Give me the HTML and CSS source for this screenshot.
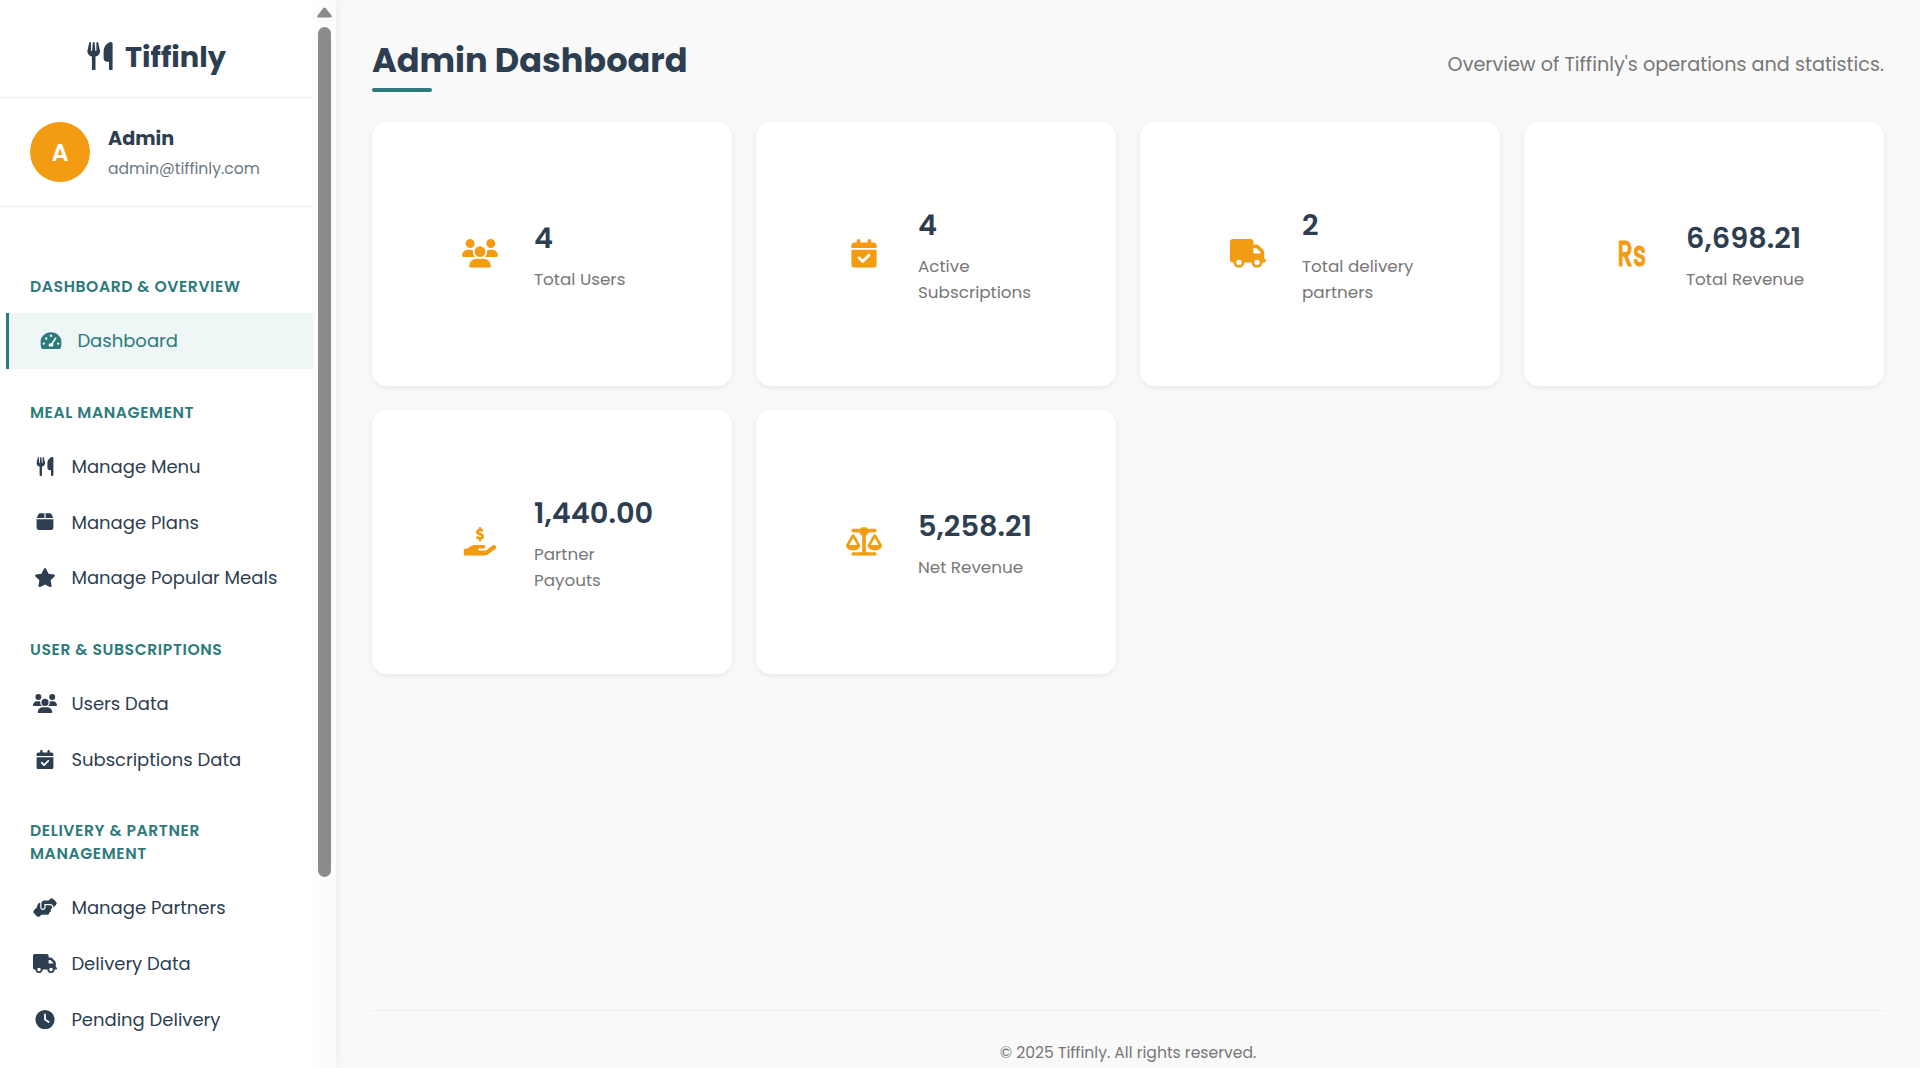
FILE: index.html
```html
<!DOCTYPE html>
<html lang="en">
<head>
<meta charset="utf-8">
<title>Admin Dashboard - Tiffinly</title>
<link rel="stylesheet" href="styles.css">
</head>
<body>
<svg class="sprite" aria-hidden="true">
  <symbol id="utensils" viewBox="0 0 448 512"><path d="M416 0C400 0 288 32 288 176V288c0 35.3 28.7 64 64 64h32V480c0 17.7 14.3 32 32 32s32-14.3 32-32V352 240 32c0-17.7-14.3-32-32-32zM64 16C64 7.8 57.9 1 49.7 .1S34.2 4.6 32.4 12.5L2.1 148.8C.7 155.1 0 161.5 0 167.9c0 45.9 35.1 83.6 80 87.7V480c0 17.7 14.3 32 32 32s32-14.3 32-32V255.6c44.9-4.1 80-41.8 80-87.7c0-6.4-.7-12.8-2.1-19.1L191.6 12.5c-1.8-8-9.3-13.3-17.4-12.4S160 7.8 160 16V150.2c0 5.4-4.4 9.8-9.8 9.8c-5.1 0-9.3-3.9-9.8-9L127.9 14.6C127.2 6.3 120.3 0 112 0s-15.2 6.3-15.9 14.6L83.7 151c-.5 5.1-4.7 9-9.8 9c-5.4 0-9.8-4.4-9.8-9.8V16z"/></symbol>
  <symbol id="gauge" viewBox="0 0 576 512">
    <mask id="gauge-face" maskUnits="userSpaceOnUse" x="0" y="0" width="576" height="512">
      <rect width="576" height="512" fill="#fff"/>
      <circle cx="96" cy="336" r="32" fill="#000"/>
      <circle cx="160" cy="200" r="32" fill="#000"/>
      <circle cx="288" cy="128" r="32" fill="#000"/>
      <circle cx="480" cy="336" r="32" fill="#000"/>
      <path d="M292 376L410 196" stroke="#000" stroke-width="46" stroke-linecap="round"/>
      <path d="M233 416a64 64 0 1 1 110 0z" fill="#000"/>
    </mask>
    <path mask="url(#gauge-face)" d="M288 32C128.94 32 0 160.94 0 320c0 52.8 14.25 102.26 39.06 144.8 5.61 9.62 16.3 15.2 27.44 15.2h443c11.14 0 21.83-5.58 27.44-15.2C561.75 422.26 576 372.8 576 320c0-159.06-128.94-288-288-288z"/>
  </symbol>
  <symbol id="box" viewBox="0 0 448 512"><path d="M50.7 58.5L0 160H208V32H93.7C75.5 32 58.9 42.3 50.7 58.5zM240 160H448L397.3 58.5C389.1 42.3 372.5 32 354.3 32H240V160zm208 32H0V416c0 35.3 28.7 64 64 64H384c35.3 0 64-28.7 64-64V192z"/></symbol>
  <symbol id="star" viewBox="0 0 576 512"><path d="M316.9 18C311.6 7 300.4 0 288.1 0s-23.4 7-28.8 18L195 150.3 51.4 171.5c-12 1.8-22 10.2-25.7 21.7s-.7 24.2 7.9 32.7L137.8 329 113.2 474.7c-2 12 3 24.2 12.9 31.3s23 8 33.8 2.3l128.3-68.5 128.3 68.5c10.8 5.7 23.9 4.9 33.8-2.3s14.9-19.3 12.9-31.3L438.5 329 542.7 225.9c8.6-8.5 11.7-21.2 7.9-32.7s-13.7-19.9-25.7-21.7L381.2 150.3 316.9 18z"/></symbol>
  <symbol id="users" viewBox="0 0 640 512"><path d="M144 0a80 80 0 1 1 0 160A80 80 0 1 1 144 0zM512 0a80 80 0 1 1 0 160A80 80 0 1 1 512 0zM0 298.7C0 239.8 47.8 192 106.7 192h42.7c15.9 0 31 3.5 44.6 9.7c-1.3 7.2-1.9 14.7-1.9 22.3c0 38.2 16.8 72.5 43.3 96c-.2 0-.4 0-.7 0H21.3C9.6 320 0 310.4 0 298.7zM405.3 320c-.2 0-.4 0-.7 0c26.6-23.5 43.3-57.8 43.3-96c0-7.6-.7-15-1.9-22.3c13.6-6.3 28.7-9.7 44.6-9.7h42.7C592.2 192 640 239.8 640 298.7c0 11.8-9.6 21.3-21.3 21.3H405.3zM224 224a96 96 0 1 1 192 0 96 96 0 1 1 -192 0zM128 485.3C128 411.7 187.7 352 261.3 352H378.7C452.3 352 512 411.7 512 485.3c0 14.7-11.9 26.7-26.7 26.7H154.7c-14.7 0-26.7-11.9-26.7-26.7z"/></symbol>
  <symbol id="calendar" viewBox="0 0 448 512"><path d="M128 0c17.7 0 32 14.3 32 32V64H288V32c0-17.7 14.3-32 32-32s32 14.3 32 32V64h48c26.5 0 48 21.5 48 48v48H0V112C0 85.5 21.5 64 48 64H96V32c0-17.7 14.3-32 32-32zM0 192H448V464c0 26.5-21.5 48-48 48H48c-26.5 0-48-21.5-48-48V192zM329 305c9.4-9.4 9.4-24.6 0-33.9s-24.6-9.4-33.9 0l-95 95-47-47c-9.4-9.4-24.6-9.4-33.9 0s-9.4 24.6 0 33.9l64 64c9.4 9.4 24.6 9.4 33.9 0L329 305z"/></symbol>
  <symbol id="handshake" viewBox="0 0 640 512"><path d="M544 248v3.3l69.7-69.7c21.9-21.9 21.9-57.3 0-79.2L535.6 24.4c-21.9-21.9-57.3-21.9-79.2 0L416.3 64.5c-2.7-.3-5.5-.5-8.3-.5H296c-37.1 0-67.6 28-71.6 64H224V248c0 22.1 17.9 40 40 40s40-17.9 40-40V176c0 0 0-.1 0-.1V160l16 0 136 0c0 0 0 0 .1 0H464c44.2 0 80 35.8 80 80v8zM336 192v56c0 39.8-32.2 72-72 72s-72-32.2-72-72V129.4c-35.9 6.2-65.8 32.3-76 68.2L99.5 255.2 26.3 328.4c-21.9 21.9-21.9 57.3 0 79.2l78.1 78.1c21.9 21.9 57.3 21.9 79.2 0l37.7-37.7c.9 0 1.8 .1 2.7 .1H384c26.5 0 48-21.5 48-48c0-5.6-1-11-2.7-16H432c26.5 0 48-21.5 48-48c0-12.8-5-24.4-13.2-33c25.7-5 45.1-27.6 45.2-54.8v-.4c-.1-30.8-25.1-55.8-56-55.8l-120 0z"/></symbol>
  <symbol id="truck" viewBox="0 0 640 512"><path d="M48 0C21.5 0 0 21.5 0 48V368c0 26.5 21.5 48 48 48H64c0 53 43 96 96 96s96-43 96-96H384c0 53 43 96 96 96s96-43 96-96h32c17.7 0 32-14.3 32-32s-14.3-32-32-32V288 256 237.3c0-17-6.7-33.3-18.7-45.3L512 114.7c-12-12-28.3-18.7-45.3-18.7H416V48c0-26.5-21.5-48-48-48H48zM416 160h50.7L544 237.3V256H416V160zM112 416a48 48 0 1 1 96 0 48 48 0 1 1 -96 0zm368-48a48 48 0 1 1 0 96 48 48 0 1 1 0-96z"/></symbol>
  <symbol id="clock" viewBox="0 0 512 512"><path d="M256 0a256 256 0 1 1 0 512A256 256 0 1 1 256 0zM232 120V256c0 8 4 15.5 10.7 20l96 64c11 7.4 25.9 4.4 33.3-6.7s4.4-25.9-6.7-33.3L280 243.2V120c0-13.3-10.7-24-24-24s-24 10.7-24 24z"/></symbol>
  <symbol id="payout" viewBox="0 0 576 512"><path d="M312 24V34.5c6.4 1.2 12.6 2.7 18.2 4.2c12.8 3.4 20.4 16.6 17 29.4s-16.6 20.4-29.4 17c-10.9-2.9-21.1-4.9-30.2-5c-7.3-.1-14.7 1.7-19.4 4.4c-2.1 1.3-3.1 2.4-3.5 3c-.3 .5-.7 1.2-.7 2.8c0 .3 0 .5 0 .6c.2 .2 .9 1.2 3.3 2.6c5.8 3.5 14.4 6.2 27.4 10.1l.9 .3c11.1 3.3 25.9 7.8 37.9 15.3c13.7 8.6 26.1 22.9 26.4 44.9c.3 22.5-11.4 38.9-26.7 48.5c-6.7 4.1-13.9 7-21.3 8.8V232c0 13.3-10.7 24-24 24s-24-10.7-24-24V220.6c-9.5-2.3-18.2-5.3-25.6-7.8c-2.1-.7-4.1-1.4-6-2c-12.6-4.2-19.4-17.8-15.2-30.4s17.8-19.4 30.4-15.2c2.6 .9 5 1.7 7.3 2.5c13.6 4.6 23.4 7.9 33.9 8.3c8 .3 15.1-1.6 19.2-4.1c1.9-1.2 2.8-2.2 3.2-2.9c.4-.6 .9-1.8 .8-4.1l0-.2c0-1 0-2.1-4-4.6c-5.7-3.6-14.3-6.4-27.1-10.3l-1.9-.6c-10.8-3.2-25-7.5-36.4-14.4c-13.5-8.1-26.5-22-26.6-44.1c-.1-22.9 12.9-38.6 27.7-47.4c6.4-3.8 13.3-6.4 20.2-8.2V24c0-13.3 10.7-24 24-24s24 10.7 24 24zM568.2 336.3c13.1 17.8 9.3 42.8-8.5 55.9L433.1 485.5c-23.4 17.2-51.6 26.5-80.7 26.5H192 32c-17.7 0-32-14.3-32-32V416c0-17.7 14.3-32 32-32H68.8l44.9-36c22.7-18.2 50.9-28 80-28H272h16 64c17.7 0 32 14.3 32 32s-14.3 32-32 32H288 272c-8.8 0-16 7.2-16 16s7.2 16 16 16H392.6l119.7-88.2c17.8-13.1 42.8-9.3 55.9 8.5z"/></symbol>
  <symbol id="scale" viewBox="0 0 640 512"><path d="M384 32H512c17.7 0 32 14.3 32 32s-14.3 32-32 32H398.4c-5.2 25.8-22.9 47.1-46.4 57.3V448H512c17.7 0 32 14.3 32 32s-14.3 32-32 32H320 128c-17.7 0-32-14.3-32-32s14.3-32 32-32H288V153.3c-23.5-10.3-41.2-31.6-46.4-57.3H128c-17.7 0-32-14.3-32-32s14.3-32 32-32H256c14.6-19.4 37.8-32 64-32s49.4 12.6 64 32zm55.6 288H584.4L512 195.8 439.6 320zM512 416c-62.9 0-115.2-34-126-78.9c-2.6-11 1-22.3 6.7-32.1l95.2-163.2c5-8.6 14.2-13.8 24.1-13.8s19.1 5.3 24.1 13.8l95.2 163.2c5.7 9.8 9.3 21.1 6.7 32.1C627.2 382 574.9 416 512 416zM126.8 195.8L54.4 320H199.3L126.8 195.8zM.9 337.1c-2.6-11 1-22.3 6.7-32.1l95.2-163.2c5-8.6 14.2-13.8 24.1-13.8s19.1 5.3 24.1 13.8l95.2 163.2c5.7 9.8 9.3 21.1 6.7 32.1C242 382 189.7 416 126.8 416S11.7 382 .9 337.1z"/></symbol>
</svg>

<div class="layout">
  <aside class="sidebar">
    <div class="sidebar-content">
      <div class="brand"><svg class="brand-icon"><use href="#utensils"/></svg><span class="brand-name">Tiffinly</span></div>
      <div class="profile">
        <div class="avatar">A</div>
        <div class="profile-text">
          <div class="profile-name">Admin</div>
          <div class="profile-email">admin@tiffinly.com</div>
        </div>
      </div>
      <nav class="menu">
        <h3 class="menu-title">DASHBOARD &amp; OVERVIEW</h3>
        <a class="menu-item active"><svg class="menu-icon"><use href="#gauge"/></svg><span>Dashboard</span></a>
        <h3 class="menu-title">MEAL MANAGEMENT</h3>
        <a class="menu-item"><svg class="menu-icon"><use href="#utensils"/></svg><span>Manage Menu</span></a>
        <a class="menu-item"><svg class="menu-icon"><use href="#box"/></svg><span>Manage Plans</span></a>
        <a class="menu-item"><svg class="menu-icon"><use href="#star"/></svg><span>Manage Popular Meals</span></a>
        <h3 class="menu-title">USER &amp; SUBSCRIPTIONS</h3>
        <a class="menu-item"><svg class="menu-icon"><use href="#users"/></svg><span>Users Data</span></a>
        <a class="menu-item"><svg class="menu-icon"><use href="#calendar"/></svg><span>Subscriptions Data</span></a>
        <h3 class="menu-title">DELIVERY &amp; PARTNER MANAGEMENT</h3>
        <a class="menu-item"><svg class="menu-icon"><use href="#handshake"/></svg><span>Manage Partners</span></a>
        <a class="menu-item"><svg class="menu-icon"><use href="#truck"/></svg><span>Delivery Data</span></a>
        <a class="menu-item"><svg class="menu-icon"><use href="#clock"/></svg><span>Pending Delivery</span></a>
      </nav>
    </div>
    <div class="scrollbar">
      <svg class="scroll-arrow" viewBox="0 0 15 11"><path d="M6.2 1.2Q7.5-.4 8.8 1.2L14.5 8.4Q15.4 10.5 13.4 10.5H1.6Q-.4 10.5.5 8.4Z"/></svg>
      <div class="scroll-thumb"></div>
    </div>
  </aside>

  <main class="main">
    <header class="page-header">
      <h1 class="page-title">Admin Dashboard</h1>
      <p class="page-subtitle">Overview of Tiffinly's operations and statistics.</p>
    </header>
    <section class="cards">
      <article class="card"><div class="card-icon"><svg><use href="#users"/></svg></div><div><div class="value">4</div><div class="label">Total Users</div></div></article>
      <article class="card"><div class="card-icon"><svg><use href="#calendar"/></svg></div><div><div class="value">4</div><div class="label">Active<br>Subscriptions</div></div></article>
      <article class="card"><div class="card-icon"><svg><use href="#truck"/></svg></div><div><div class="value">2</div><div class="label">Total delivery<br>partners</div></div></article>
      <article class="card"><div class="card-icon"><svg viewBox="0 0 36 28.8"><text class="rupee" x="3.5" y="26.5" textLength="28.5" lengthAdjust="spacingAndGlyphs">Rs</text></svg></div><div><div class="value">6,698.21</div><div class="label">Total Revenue</div></div></article>
      <article class="card"><div class="card-icon"><svg><use href="#payout"/></svg></div><div><div class="value">1,440.00</div><div class="label">Partner<br>Payouts</div></div></article>
      <article class="card"><div class="card-icon"><svg><use href="#scale"/></svg></div><div><div class="value">5,258.21</div><div class="label">Net Revenue</div></div></article>
    </section>
    <footer class="footer">© 2025 Tiffinly. All rights reserved.</footer>
  </main>
</div>
</body>
</html>
```
FILE: styles.css
```css
* { box-sizing: border-box; margin: 0; padding: 0; }
body { font-family: Poppins, Inter, "Open Sans", sans-serif; background: #f9f9f9; color: #2c3e50; overflow: hidden; }
.sprite { position: absolute; width: 0; height: 0; }
svg { fill: currentColor; }
.layout { display: flex; height: 1068px; }

.sidebar { display: flex; width: 336px; flex: none; background: #fff; box-shadow: 2px 0 10px rgba(0, 0, 0, .06); }
.sidebar-content { width: 313px; overflow: hidden; }
.brand { display: flex; align-items: center; justify-content: center; height: 98px; padding-top: 15px; gap: 12px; border-bottom: 1px solid #eee; }
.brand-icon { width: 26px; height: 28.8px; }
.brand-name { padding-top: 2px; font-size: 28.8px; font-weight: 700; line-height: 40px; }
.profile { display: flex; align-items: center; gap: 18px; height: 109px; padding: 0 30px; border-bottom: 1px solid #eee; }
.avatar { width: 60px; height: 60px; border-radius: 50%; background: #f39c12; color: #fff; font-size: 24px; font-weight: 600; line-height: 61px; text-align: center; }
.profile-text { padding-top: 3px; }
.profile-name { font-size: 19.2px; font-weight: 700; line-height: 30px; }
.profile-email { font-size: 15.6px; line-height: 30px; color: #6b7885; }
.menu { padding-top: 36.28px; }
.menu-title { padding: 31.9px 30px 14.7px; font-size: 15.6px; font-weight: 600; line-height: 23px; letter-spacing: .6px; color: #2c7a7b; }
.menu-item { display: flex; align-items: center; gap: 11.4px; height: 55.85px; padding-left: 30px; font-size: 18px; line-height: 27px; }
.menu-icon { width: 30px; height: 19.2px; }
.menu-item.active { margin-left: 6px; padding-left: 27px; border-left: 3px solid #2c7a7b; background: #eef6f6; color: #2c7a7b; }

.scrollbar { width: 23px; padding: 6.5px 5px 0 4px; background: #fcfcfc; color: #8b8b8b; }
.scroll-arrow { display: block; width: 15px; height: 11px; }
.scroll-thumb { width: 13px; height: 850px; margin: 9.5px 0 0 1px; border-radius: 7px; background: #8b8b8b; }

.main { display: flex; flex-direction: column; flex: 1; padding: 36px 36px 0; }
.page-header { display: flex; justify-content: space-between; height: 86px; }
.page-title { font-size: 33.6px; font-weight: 700; line-height: 49px; }
.page-title::after { content: ""; display: block; width: 60px; height: 4px; margin-top: 3px; border-radius: 2px; background: #2c7a7b; }
.page-subtitle { padding-top: 14px; font-size: 19.2px; line-height: 29px; color: #777; }
.cards { display: grid; grid-template-columns: repeat(4, 360px); gap: 24px; }
.card { display: flex; align-items: center; height: 264px; padding-left: 90px; border-radius: 14.4px; background: #fff; box-shadow: 0 2px 5px rgba(0, 0, 0, .08); }
.card-icon { display: flex; width: 36px; margin: 0 36px 1.5px 0; color: #f39c12; }
.card-icon svg { width: 36px; height: 28.8px; overflow: visible; }
.rupee { font-size: 35px; font-weight: 500; stroke: currentColor; stroke-width: 1px; stroke-linejoin: round; }
.value { margin-bottom: 6px; font-size: 28.8px; font-weight: 600; line-height: 44px; }
.label { font-size: 16.8px; line-height: 26px; color: #777; }
.footer { margin-top: 336px; padding-top: 28px; border-top: 1px solid #eee; font-size: 15.6px; line-height: 28px; color: #777; text-align: center; }
```
